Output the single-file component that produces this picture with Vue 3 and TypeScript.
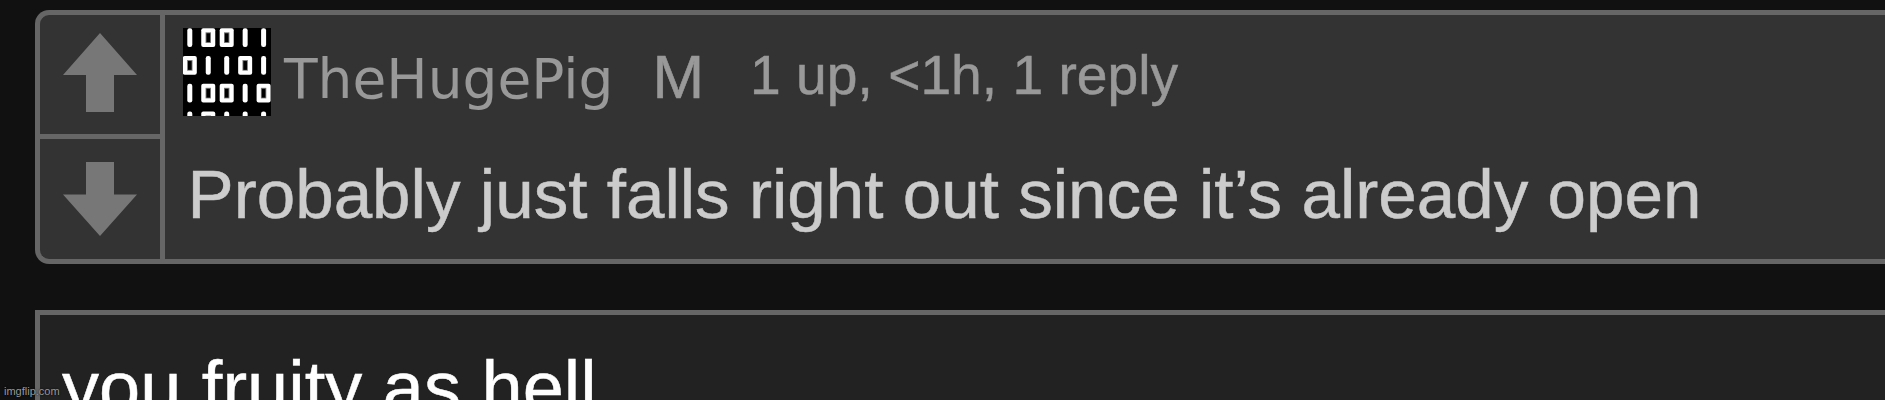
<template>
  <div class="page">
    <div class="comment">
      <div class="votes">
        <button class="vote" type="button" aria-label="Upvote">
          <svg class="arrow-up" viewBox="0 0 74 79">
            <polygon points="37,0 74,42 51,42 51,79 23,79 23,42 0,42" />
          </svg>
        </button>
        <button class="vote" type="button" aria-label="Downvote">
          <svg class="arrow-down" viewBox="0 0 74 74">
            <polygon points="23,0 51,0 51,32.5 74,32.5 37,74 0,32.5 23,32.5" />
          </svg>
        </button>
      </div>
      <div class="body">
        <div class="info">
          <svg class="avatar" viewBox="0 0 88 88">
            <rect width="88" height="88" fill="#000" />
            <template v-for="bit in bits" :key="bit.key">
              <rect
                v-if="bit.on"
                :x="bit.x - 2.5"
                :y="bit.y"
                width="5"
                height="18.6"
                rx="2.2"
                fill="#fff"
              />
              <template v-else>
                <rect :x="bit.x - 7" :y="bit.y" width="14" height="18.6" rx="2" fill="#fff" />
                <rect :x="bit.x - 2.7" :y="bit.y + 4" width="5.4" height="10.6" fill="#777" />
                <rect :x="bit.x - 1.8" :y="bit.y + 5" width="3.6" height="8.8" fill="#000" />
              </template>
            </template>
          </svg>
          <span class="username">{{ comment.user }}</span>
          <span class="badge">{{ comment.badge }}</span>
          <span class="meta">{{ comment.meta }}</span>
        </div>
        <div class="text">{{ comment.text }}</div>
      </div>
    </div>
    <div class="reply">{{ reply }}</div>
    <span class="watermark">imgflip.com</span>
  </div>
</template>

<script setup lang="ts">
import { ref } from 'vue'

interface Comment {
  user: string
  badge: string
  meta: string
  text: string
}

interface Bit {
  key: string
  on: boolean
  x: number
  y: number
}

const comment: Comment = {
  user: 'TheHugePig',
  badge: 'M',
  meta: '1 up, <1h, 1 reply',
  text: 'Probably just falls right out since it’s already open'
}

const reply = ref('you fruity as hell')

const rows = ['10011', '01101', '10010', '10111']

const bits: Bit[] = rows.flatMap((row, r) =>
  row.split('').map((char, c) => ({
    key: `${r}-${c}`,
    on: char === '1',
    x: 6.8 + c * 18.45,
    y: 0.3 + r * 27.75
  }))
)
</script>

<style>
body {
  margin: 0;
  background: #111;
}
</style>

<style scoped>
.page {
  position: relative;
  box-sizing: border-box;
  height: 400px;
  padding: 10px 0 0 35px;
  overflow: hidden;
  background: #111;
  font-family: "Liberation Sans", Arial, sans-serif;
  white-space: nowrap;
}

.comment {
  display: flex;
  box-sizing: border-box;
  height: 254px;
  border: 5px solid #666;
  border-right: 0;
  border-radius: 14px 0 0 14px;
  background: #333;
}

.votes {
  display: flex;
  flex-direction: column;
  width: 120px;
  border-right: 5px solid #666;
}

.vote {
  display: flex;
  flex: 1;
  justify-content: center;
  box-sizing: border-box;
  padding: 18px 0 0;
  border: 0;
  background: none;
}

.vote:first-child {
  flex: 0 0 124px;
  border-bottom: 5px solid #666;
}

.vote + .vote {
  padding-top: 23px;
}

.vote svg {
  width: 74px;
  fill: #777;
}

.arrow-up {
  height: 79px;
}

.arrow-down {
  height: 74px;
}

.body {
  flex: 1;
  padding: 13px 0 0 18px;
}

.info {
  display: flex;
  align-items: flex-start;
  height: 88px;
  color: #999;
}

.avatar {
  width: 88px;
  height: 88px;
}

.username {
  margin: 19px 0 0 13px;
  font-family: "DejaVu Sans", Verdana, sans-serif;
  font-size: 55px;
  line-height: 64px;
}

.badge {
  margin: 16px 0 0 39px;
  font-size: 62px;
  line-height: 66px;
  -webkit-text-stroke: 0.6px #999;
}

.meta {
  margin: 15px 0 0 46px;
  font-size: 55.2px;
  line-height: 64px;
  -webkit-text-stroke: 0.5px #999;
}

.text {
  margin: 38px 0 0 4.5px;
  color: #ccc;
  font-size: 69.2px;
  line-height: 80px;
  -webkit-text-stroke: 0.5px #ccc;
}

.reply {
  box-sizing: border-box;
  height: 150px;
  margin-top: 46px;
  padding: 31px 0 0 22px;
  border: 5px solid #666;
  border-right: 0;
  background: #222;
  color: #fff;
  font-size: 74px;
  line-height: 84px;
  -webkit-text-stroke: 0.5px #fff;
}

.watermark {
  position: absolute;
  left: 4px;
  bottom: 2px;
  color: #999;
  font-size: 11px;
  line-height: 13px;
  text-shadow: 0 0 2px #000;
}
</style>
